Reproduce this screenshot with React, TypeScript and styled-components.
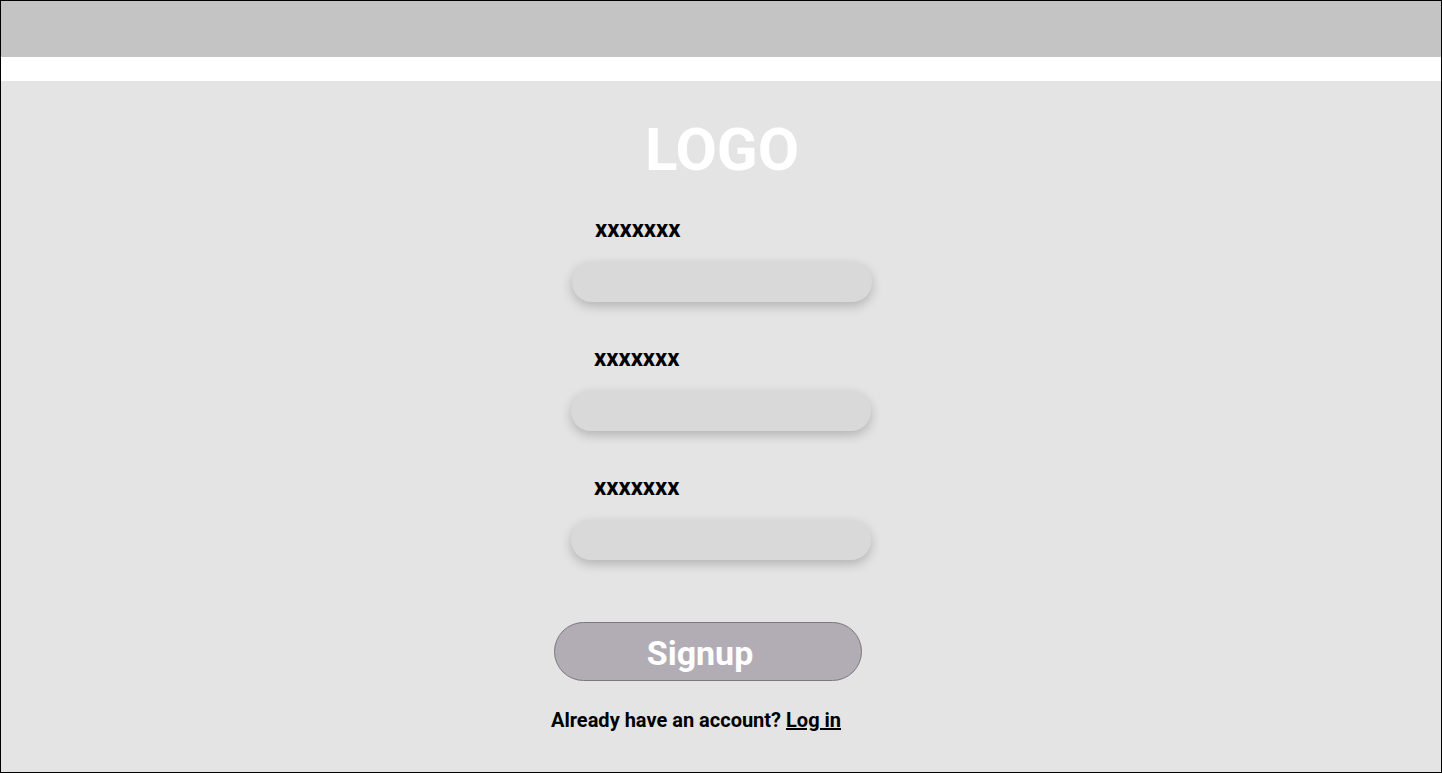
import React from "react";
import styled, { createGlobalStyle } from "styled-components";

const Global = createGlobalStyle`
  html, body { margin: 0; padding: 0; }
  body { font-family: Roboto, "Noto Sans", Arial, sans-serif; }
  * { box-sizing: border-box; }
`;

const Frame = styled.div`
  width: 1442px;
  height: 773px;
  border: 1px solid #000;
  display: flex;
  flex-direction: column;
  background: #e4e4e4;
`;

const TopBar = styled.header`
  height: 56px;
  background: #c4c4c4;
  flex-shrink: 0;
`;

const Spacer = styled.div`
  height: 24px;
  background: #ffffff;
  flex-shrink: 0;
`;

const Main = styled.main`
  flex: 1;
  display: flex;
  justify-content: center;
  padding-top: 31px;
`;

const Form = styled.form`
  width: 300px;
  display: flex;
  flex-direction: column;
  align-items: flex-start;
`;

const Logo = styled.h1`
  align-self: stretch;
  margin: 0 0 28px 2px;
  text-align: center;
  font-family: Roboto, sans-serif;
  font-weight: 700;
  font-size: 60px;
  line-height: 75px;
  color: #ffffff;
`;

const Label = styled.label<{ $shift?: number }>`
  display: block;
  margin: 0 0 19px ${(p) => 23 + (p.$shift ?? 0)}px;
  font-family: Roboto, sans-serif;
  font-weight: 700;
  font-size: 24px;
  line-height: 28px;
  color: #000;
`;

const Field = styled.input<{ $shift?: number }>`
  width: 300px;
  height: 40px;
  margin: 0 0 42px ${(p) => p.$shift ?? 0}px;
  border: none;
  border-radius: 20px;
  background: #d9d9d9;
  box-shadow: 0 4px 11px rgba(0, 0, 0, 0.22);
  outline: none;
  padding: 0 20px;
  font-family: Roboto, sans-serif;
  font-size: 16px;
`;

const SubmitButton = styled.button`
  width: 308px;
  height: 59px;
  margin: 20px 0 0 -17px;
  border: 1px solid #7c787e;
  border-radius: 30px;
  background: #b2adb5;
  color: #ffffff;
  font-family: Roboto, sans-serif;
  font-weight: 700;
  font-size: 34px;
  line-height: 40px;
  padding: 2px 16px 0 0;
  cursor: pointer;
`;

const Footer = styled.p`
  margin: 28px 0 0 -20px;
  font-family: Roboto, sans-serif;
  font-weight: 700;
  font-size: 20px;
  line-height: 23px;
  color: #000;
  white-space: nowrap;
`;

const LoginLink = styled.a`
  color: #000;
  text-decoration: underline;
`;

const fields = [
  { id: "f1", shift: 1 },
  { id: "f2", shift: 0 },
  { id: "f3", shift: 0 },
];

export default function App() {
  return (
    <>
      <Global />
      <Frame>
        <TopBar />
        <Spacer />
        <Main>
          <Form onSubmit={(e) => e.preventDefault()}>
            <Logo>LOGO</Logo>
            {fields.map((f) => (
              <React.Fragment key={f.id}>
                <Label htmlFor={f.id} $shift={f.shift}>xxxxxxx</Label>
                <Field id={f.id} $shift={f.shift} />
              </React.Fragment>
            ))}
            <SubmitButton type="submit">Signup</SubmitButton>
            <Footer>
              Already have an account? <LoginLink href="#">Log in</LoginLink>
            </Footer>
          </Form>
        </Main>
      </Frame>
    </>
  );
}
